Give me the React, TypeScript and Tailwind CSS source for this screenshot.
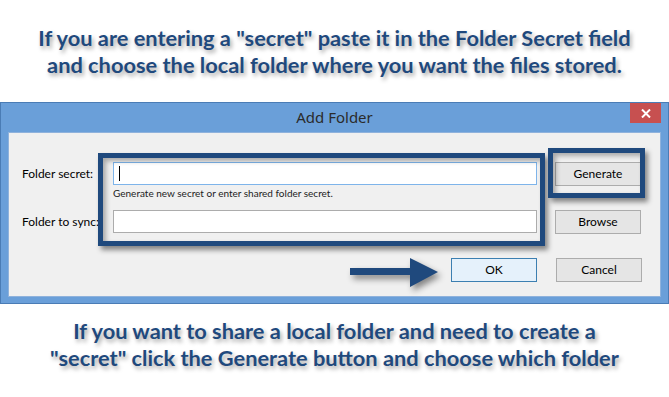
const navy = "#1f497d";

function Caption({ lines }: { lines: string[] }) {
  return (
    <div
      className="text-center text-[21.8px] font-bold leading-[27px] text-[#1f497d] [font-family:Lato,'Liberation_Sans',sans-serif] [text-shadow:2px_3px_4px_rgba(0,0,0,0.35)]"
    >
      {lines.map((l) => (
        <div key={l} className="whitespace-nowrap">{l}</div>
      ))}
    </div>
  );
}

function WinButton({ label, focused }: { label: string; focused?: boolean }) {
  return (
    <button
      className={`h-[24px] w-[86px] shrink-0 border text-[12px] text-black ${
        focused ? "border-[#3c7fb1] bg-[#e5f1fb]" : "border-[#acacac] bg-[#e5e5e5]"
      }`}
    >
      {label}
    </button>
  );
}

export default function App() {
  return (
    <div className="flex h-[397px] w-[669px] flex-col bg-white">
      <div className="h-[102px] shrink-0 pt-[24px]">
        <Caption
          lines={[
            'If you are entering a "secret" paste it in the Folder Secret field',
            "and choose the local folder where you want the files stored.",
          ]}
        />
      </div>

      {/* dialog window */}
      <div className="flex h-[202px] shrink-0 flex-col border border-[#4a7cb5] bg-[#6a9fd9] px-[7px] pb-[6px] [font-family:Lato,sans-serif]">
        <div className="relative flex h-[29px] items-center justify-center">
          <span className="text-[15px] text-[#2b2b2b] [font-family:'Noto_Sans',sans-serif]">Add Folder</span>
          <div className="absolute right-0 top-0 flex h-[20px] w-[31px] items-center justify-center bg-[#c75050]">
            <svg width="10" height="9" viewBox="0 0 10 9">
              <path d="M1 0.5 L9 8.5 M9 0.5 L1 8.5" stroke="white" strokeWidth="2" />
            </svg>
          </div>
        </div>

        <div className="relative flex-1 border border-[#8fb2dc] bg-[#f0f0f0] pl-[13px] pt-[29px] text-[12px] text-black">
          <div className="flex items-start">
            <div className="flex h-[24px] w-[91px] shrink-0 items-center">Folder secret:</div>
            <div className="w-[424px] shrink-0">
              <div className="flex h-[23px] items-center border border-[#7eb4ea] bg-white pl-[5px]">
                <div className="h-[15px] w-px bg-black" />
              </div>
              <div className="mt-[1px] whitespace-nowrap text-[10px] leading-[14px] text-[#222]">
                Generate new secret or enter shared folder secret.
              </div>
            </div>
            <div className="ml-[18px] shrink-0">
              <WinButton label="Generate" />
            </div>
          </div>

          <div className="mt-[10px] flex items-start">
            <div className="flex h-[23px] w-[91px] shrink-0 items-center whitespace-nowrap">Folder to sync:</div>
            <div className="h-[23px] w-[424px] shrink-0 border border-[#acacac] bg-white" />
            <div className="ml-[18px] shrink-0">
              <WinButton label="Browse" />
            </div>
          </div>

          <div className="mt-[24px] flex gap-[19px] pl-[429px]">
            <WinButton label="OK" focused />
            <WinButton label="Cancel" />
          </div>

          {/* highlight boxes */}
          <div className="absolute left-[89px] top-[20px] h-[93px] w-[447px] border-[5px] border-[#1f497d] shadow-[3px_4px_5px_rgba(0,0,0,0.45),inset_3px_3px_5px_rgba(0,0,0,0.3)]" />
          <div className="absolute left-[539px] top-[15px] h-[50px] w-[97px] border-[5px] border-[#1f497d] shadow-[3px_4px_5px_rgba(0,0,0,0.45),inset_3px_3px_5px_rgba(0,0,0,0.3)]" />

          {/* arrow */}
          <svg
            className="absolute left-[340px] top-[124px]"
            width="96"
            height="36"
            viewBox="0 0 96 36"
            style={{ filter: "drop-shadow(3px 4px 3px rgba(0,0,0,0.45))" }}
          >
            <path d="M1 11 L61 11 L61 1 L89 15 L61 30 L61 18 L1 18 Z" fill={navy} />
          </svg>
        </div>
      </div>

      <div className="pt-[13px]">
        <Caption
          lines={[
            "If you want to share a local folder and need to create a",
            '"secret" click the Generate button and choose which folder',
          ]}
        />
      </div>
    </div>
  );
}
